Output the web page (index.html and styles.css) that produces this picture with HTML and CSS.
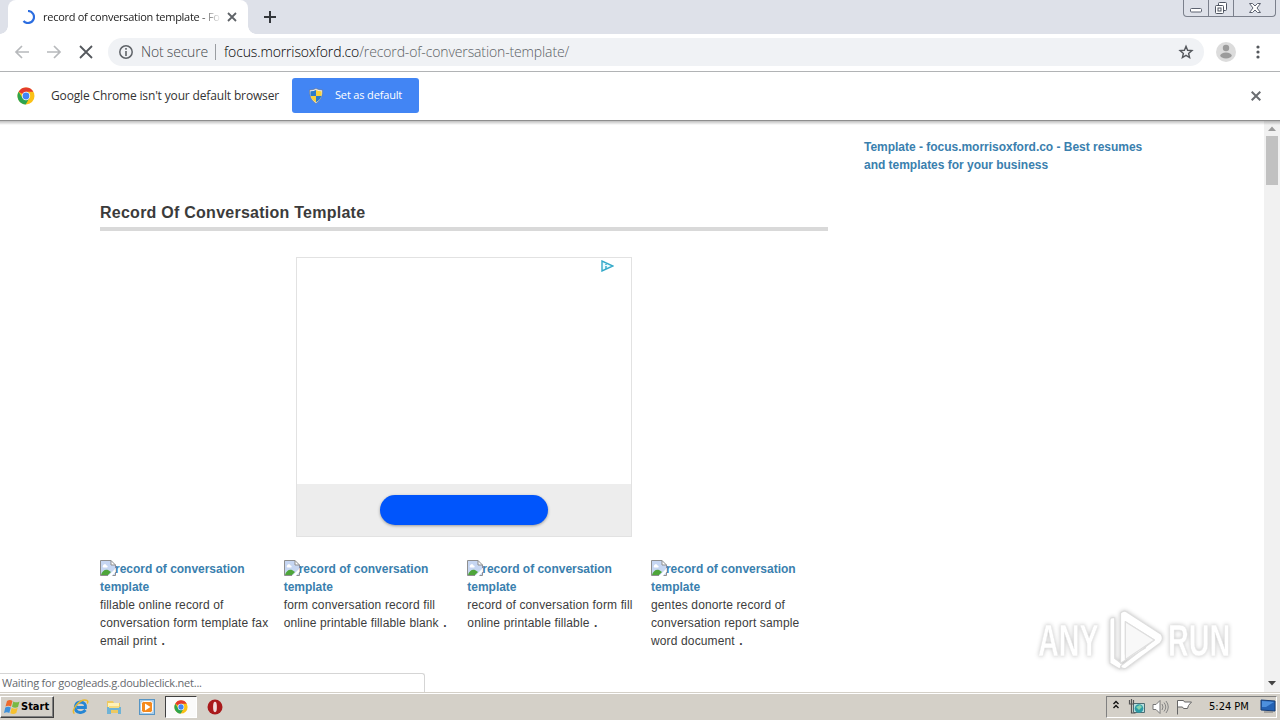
FILE: index.html
```html
<!DOCTYPE html>
<html lang="en">
<head>
    <meta charset="UTF-8">
    <title>Record Of Conversation Template</title>
    <link rel="stylesheet" href="styles.css">
</head>
<body>
    <svg class="defs" width="0" height="0">
        <symbol id="chrome" viewBox="0 0 18 18">
            <circle cx="9" cy="9" r="8.5" fill="#fbc116"/>
            <path d="M9 9 1.6 4.8A8.5 8.5 0 0 1 16.4 4.8H9z" fill="#e33b2e"/>
            <path d="M1.6 4.8A8.5 8.5 0 0 0 8.7 17.5L12.4 11 9 9 5.6 11z" fill="#2da44e"/>
            <circle cx="9" cy="9" r="4.2" fill="#fff"/>
            <circle cx="9" cy="9" r="3.4" fill="#4285f4"/>
        </symbol>
        <symbol id="broken" viewBox="0 0 16 16">
            <path d="M.5.5h10.500l4.500 4.500v10.500H.5z" fill="#c6d6f2"/>
            <path d="M3 6c0-2 3-2.500 3.500-.5C8 5.500 8 7.500 7 7.500H3.500C2.500 7.500 2.500 6 3 6z" fill="#fff"/>
            <path d="M1 15c1-4 4-6 7-5l3 2-3 3z" fill="#4ea53a"/>
            <path d="M11 .5v4.500h4.500z" fill="#fff"/>
            <path d="M15.500 8V5L11 .5H.5v15H8M11 .5V5h4.500M12.500 15.500h3V12" fill="none" stroke="#8f8f8f"/>
            <path d="M8 16 16 8v3.500L11.500 16z" fill="#fff"/>
        </symbol>
    </svg>

    <header class="tabstrip">
        <div class="tab">
            <svg class="spinner" width="14" height="14" viewBox="0 0 14 14"><path d="M7 1a6 6 0 1 1-4.500 10" fill="none" stroke="#2b6de0" stroke-width="2.200"/></svg>
            <span class="tab-title">record of conversation template - Fo</span>
            <svg width="10" height="10" viewBox="0 0 10 10"><path d="m1 1 8 8M9 1 1 9" stroke="#5f6368" stroke-width="1.800"/></svg>
        </div>
        <svg class="new-tab" width="12" height="12" viewBox="0 0 12 12"><path d="M6 0v12M0 6h12" stroke="#33363b" stroke-width="2"/></svg>
        <div class="window-buttons">
            <span class="wb"><svg width="12" height="16" viewBox="0 0 12 16"><rect x=".5" y="8.500" width="11" height="3.500" rx="1" fill="#fff" stroke="#5c6270"/></svg></span>
            <span class="wb"><svg width="14" height="16" viewBox="0 0 14 16"><rect x="4.500" y="2.500" width="8" height="8" rx="1" fill="#fff" stroke="#4e5461"/><rect x="1.500" y="5.500" width="8" height="8" rx="1" fill="#fff" stroke="#4e5461"/><rect x="4" y="8" width="3" height="3" fill="#fff" stroke="#4e5461"/></svg></span>
            <span class="wb wide"><svg width="12" height="16" viewBox="0 0 12 16"><path d="M.5 3.500h3L6 6l2.500-2.500h3L8 8l3.500 4.500h-3L6 10l-2.500 2.500h-3L4 8z" fill="#fff" stroke="#5c6270"/></svg></span>
        </div>
    </header>

    <div class="toolbar">
        <svg class="nav" width="16" height="14" viewBox="0 0 16 14"><path d="M15 7H2M8 1 2 7l6 6" fill="none" stroke="#b7b9bc" stroke-width="1.700"/></svg>
        <svg class="nav" width="16" height="14" viewBox="0 0 16 14"><path d="M1 7h13M8 1l6 6-6 6" fill="none" stroke="#b7b9bc" stroke-width="1.700"/></svg>
        <svg class="nav" width="16" height="14" viewBox="0 0 16 14"><path d="m2 1 12 12M14 1 2 13" fill="none" stroke="#55585d" stroke-width="1.800"/></svg>
        <div class="omnibox">
            <svg width="14" height="14" viewBox="0 0 14 14"><circle cx="7" cy="7" r="6.200" fill="none" stroke="#5f6368" stroke-width="1.500"/><path d="M7 3v1.700M7 6v5" stroke="#5f6368" stroke-width="1.600"/></svg>
            <span class="not-secure">Not secure</span>
            <span class="divider"></span>
            <span class="url"><span class="host">focus.morrisoxford.co</span><span class="path">/record-of-conversation-template/</span></span>
            <svg class="star" width="16" height="16" viewBox="0 0 16 16"><path d="m8 2.300 1.600 4 4.300.3-3.300 2.800 1 4.200L8 11.300l-3.600 2.300 1-4.200-3.300-2.800 4.300-.3z" fill="none" stroke="#55585d" stroke-width="1.400"/></svg>
        </div>
        <svg class="avatar" width="20" height="20" viewBox="0 0 20 20"><circle cx="10" cy="10" r="10" fill="#dcdcdc"/><circle cx="10" cy="6" r="3.200" fill="#9b9b9b"/><ellipse cx="10" cy="13.500" rx="5.700" ry="3" fill="#9b9b9b"/></svg>
        <svg class="menu" width="4" height="14" viewBox="0 0 4 14"><circle cx="2" cy="2" r="1.600" fill="#55585d"/><circle cx="2" cy="7" r="1.600" fill="#55585d"/><circle cx="2" cy="12" r="1.600" fill="#55585d"/></svg>
    </div>

    <div class="infobar">
        <svg width="18" height="18"><use href="#chrome"/></svg>
        <span class="info-text">Google Chrome isn't your default browser</span>
        <div class="default-btn">
            <svg width="14" height="16" viewBox="0 0 14 16"><path d="M7 .5Q10 2 13.500 2q.5 9-6.500 13.500Q0 11 .5 2 4 2 7 .5z" fill="#eee" stroke="#6d7480" stroke-width=".6"/><path d="M7 2v6H1.700Q1.200 5.500 1.500 3.200 4.500 3.200 7 2zM7 8h5.300Q11.500 12 7 14.300z" fill="#2b7bcb"/><path d="M7 2q2.500 1.200 5.500 1.200.3 2.300-.2 4.800H7zM1.700 8H7v6.300Q2.500 12 1.700 8z" fill="#f7d13c"/></svg>
            <span class="btn-text">Set as default</span>
        </div>
        <svg class="info-close" width="10" height="10" viewBox="0 0 10 10"><path d="m.7.7 8.600 8.600M9.300.7.700 9.300" stroke="#6a6d71" stroke-width="2"/></svg>
    </div>

    <div class="viewport">
        <div class="page">
            <main class="main">
                <h1>Record Of Conversation Template</h1>
                <div class="ad">
                    <svg class="adchoices" width="13" height="12" viewBox="0 0 13 12"><path d="M1 1v10l11-5z" fill="#e9fbff" stroke="#33a9c9" stroke-width="1.400"/><path d="M5 4v1M5 6v3" stroke="#33a9c9" stroke-width="1.400"/></svg>
                    <div class="ad-footer"><span class="ad-btn"></span></div>
                </div>
                <div class="gallery">
                    <div class="item">
                        <a><svg class="thumb" width="16" height="16"><use href="#broken"/></svg>record of conversation<br>template</a>
                        <p>fillable online record of<br>conversation form template fax<br>email print<b> .</b></p>
                    </div>
                    <div class="item">
                        <a><svg class="thumb" width="16" height="16"><use href="#broken"/></svg>record of conversation<br>template</a>
                        <p>form conversation record fill<br>online printable fillable blank<b> .</b></p>
                    </div>
                    <div class="item">
                        <a><svg class="thumb" width="16" height="16"><use href="#broken"/></svg>record of conversation<br>template</a>
                        <p>record of conversation form fill<br>online printable fillable<b> .</b></p>
                    </div>
                    <div class="item">
                        <a><svg class="thumb" width="16" height="16"><use href="#broken"/></svg>record of conversation<br>template</a>
                        <p>gentes donorte record of<br>conversation report sample<br>word document<b> .</b></p>
                    </div>
                </div>
            </main>
            <aside class="sidebar"><a>Template - focus.morrisoxford.co - Best resumes<br>and templates for your business</a></aside>
        </div>
        <div class="scrollbar">
            <svg width="16" height="14" viewBox="0 0 16 14"><path d="M4 10h8L8 5.500z" fill="#9a9a9a"/></svg>
            <span class="thumb-bar"></span>
            <svg class="down" width="16" height="17" viewBox="0 0 16 17"><path d="M4 6h8l-4 4.500z" fill="#444"/></svg>
        </div>
        <div class="status">Waiting for googleads.g.doubleclick.net...</div>
        <div class="watermark">
            <span class="wm-any">ANY</span>
            <svg width="58" height="66" viewBox="0 0 60 66"><g fill="#fff" stroke="#dedede" stroke-width="1.200" stroke-linejoin="round"><path d="M3 12q0-4 5-3v42l8 6-3 5-10-6z"/><path d="M14 4q4-4 8 0l34 22q3 5-1 9L20 61q-4 2-6-2l35-27-30-19v34l18-11 3 4-26 16z"/><path d="m19 13 30 19-30 20z" fill="#f8f8f8"/></g></svg>
            <span class="wm-run">RUN</span>
        </div>
    </div>

    <footer class="taskbar">
        <div class="start">
            <svg width="17" height="16" viewBox="0 0 17 16"><path d="M3 2q3-2 5.500 0L7 7.500Q4.500 6 1.500 7.500z" fill="#ee6a2c"/><path d="M9.300 2.500q3 1.700 6.200 0L14 8q-3 1.500-6-.2z" fill="#79b943"/><path d="M1.300 8.500q3-1.500 5.500 0L5.300 14Q3 12.500 0 14z" fill="#3f91db"/><path d="M7.700 8.800q3 1.700 6 0L12.300 14q-3 1.700-6 .2z" fill="#f6c12f"/></svg>
            <span>Start</span>
        </div>
        <div class="quick">
            <span class="task"><svg width="17" height="16" viewBox="0 0 17 16"><path d="M13.500 11Q11 14 8 13.500 3 13 3.300 8 4 3 8.500 3 14 3.500 13.500 8.500H5" fill="none" stroke="#2586d4" stroke-width="2.800"/><path d="M2.500 14.500C-2 12 8-1 15 1.500q1.500 1 .2 3" fill="none" stroke="#e9b92f" stroke-width="1.500"/></svg></span>
            <span class="task"><svg width="16" height="16" viewBox="0 0 16 16"><path d="M1 2h6l1 2h6v10H1z" fill="#edc962"/><path d="M2 4h11v5H2z" fill="#fff2b7"/><path d="M1 8h14v7h-3v-4H5v4H1z" fill="#6fb3d6"/><path d="M3 7h10v2H3z" fill="#f6dc80"/></svg></span>
            <span class="task"><svg width="16" height="16" viewBox="0 0 16 16"><rect x=".5" y=".5" width="15" height="15" fill="#a9cce7" stroke="#5795c4"/><rect x="2.500" y="2.500" width="11" height="11" rx="2" fill="#f58a1d" stroke="#fff"/><path d="m6 4.500 5.500 3.500L6 11.500z" fill="#fff"/></svg></span>
            <span class="task active"><svg width="14" height="14"><use href="#chrome"/></svg></span>
            <span class="task"><svg width="16" height="16" viewBox="0 0 16 16"><circle cx="8" cy="8" r="7.500" fill="#a9191b"/><ellipse cx="8" cy="8" rx="1.900" ry="5.200" fill="#f1dddd"/></svg></span>
        </div>
        <div class="tray">
            <svg class="chev" width="8" height="10" viewBox="0 0 8 10"><path d="m1.500 4 2.500-2.500L6.500 4M1.500 8 4 5.500 6.500 8" fill="none" stroke="#111" stroke-width="1.400"/></svg>
            <svg class="net" width="17" height="16" viewBox="0 0 17 16"><path d="M5.500 4.500h11v9h-11z" fill="#b9dfdf" stroke="#4d6e74"/><circle cx="11" cy="9.500" r="4.300" fill="#2c9ba6"/><path d="m8 8 4-2 2 2-3 3z" fill="#86d4ae"/><path d="M1.500 1v4h4V1M3.500 0v14h4" fill="none" stroke="#555" stroke-width="1.200"/></svg>
            <svg class="vol" width="17" height="16" viewBox="0 0 17 16"><path d="M1 5.500h3l4-4v13l-4-4H1z" fill="#fff" stroke="#777"/><path d="M10 5q2 3 0 6M12 3.500q3.500 4.500 0 9M14 2q4.500 6 0 12" fill="none" stroke="#858585"/></svg>
            <svg class="flag" width="17" height="16" viewBox="0 0 17 16"><path d="M1.500 15.500V1.500h6l1 1.500h7l-3 3.500-1 3h-4l-1-1.500h-5" fill="#fff" stroke="#666"/></svg>
            <span class="clock">5:24 PM</span>
            <svg class="desk" width="16" height="15" viewBox="0 0 16 15"><path d="m1 1 14 1v10L1 11z" fill="#2462b4" stroke="#173d74"/><path d="m2 2 12 1-8 5H2z" fill="#4d90dd"/><path d="M4 13h9" stroke="#777"/></svg>
        </div>
    </footer>
</body>
</html>
```
FILE: styles.css
```css
* {
    box-sizing: border-box;
}
body {
    margin: 0;
    width: 1280px;
    height: 720px;
    overflow: hidden;
    display: flex;
    flex-direction: column;
    background: #fff;
    font-family: "Liberation Sans", Arial, sans-serif;
    font-size: 12px;
    white-space: nowrap;
}
svg {
    display: block;
    flex: none;
}
.defs {
    position: absolute;
}
.tabstrip {
    height: 34px;
    flex: none;
    display: flex;
    background: #dee1e9;
}
.tab {
    width: 240px;
    margin-left: 8px;
    padding: 0 11px 0 13px;
    display: flex;
    align-items: center;
    background: #fff;
    border-radius: 8px 8px 0 0;
    position: relative;
}
.tab::before,
.tab::after {
    content: "";
    position: absolute;
    bottom: 0;
    width: 8px;
    height: 8px;
}
.tab::before {
    left: -8px;
    background: radial-gradient(circle at 0 0, transparent 7.5px, #fff 8px);
}
.tab::after {
    right: -8px;
    background: radial-gradient(circle at 100% 0, transparent 7.5px, #fff 8px);
}
.tab-title {
    width: 179px;
    margin: 0 auto 1px 8px;
    font-family: "Open Sans", sans-serif;
    font-size: 11px;
    letter-spacing: -0.27px;
    color: #222;
    -webkit-mask-image: linear-gradient(90deg, #000 155px, transparent 179px);
    mask-image: linear-gradient(90deg, #000 155px, transparent 179px);
}
.new-tab {
    margin: 11px 0 0 16px;
}
.window-buttons {
    display: flex;
    width: 93px;
    height: 17px;
    margin: 0 4px 0 auto;
    border: 1px solid #7b808c;
    border-top: 0;
    border-radius: 0 0 4px 4px;
}
.wb {
    width: 25px;
    display: flex;
    justify-content: center;
    border-right: 1px solid #7b808c;
}
.wide {
    width: 41px;
    border: 0;
}
.toolbar {
    height: 38px;
    flex: none;
    display: flex;
    align-items: center;
    padding: 0 20px 2px 14px;
    border-bottom: 1px solid #b1b3b5;
}
.nav {
    margin-right: 16px;
}
.omnibox {
    width: 1096px;
    height: 28px;
    margin-left: -2px;
    padding: 0 10px 0 11px;
    display: flex;
    align-items: center;
    background: #f0f2f5;
    border-radius: 14px;
    font-family: "Open Sans", sans-serif;
    font-weight: 300;
    font-size: 14px;
    letter-spacing: -0.13px;
}
.not-secure {
    margin-left: 8px;
    width: 67px;
    color: #44474b;
    letter-spacing: -0.2px;
}
.divider {
    width: 1px;
    height: 16px;
    margin: 0 8px 0 7px;
    background: #9a9da1;
}
.host {
    color: #000;
}
.path {
    color: #5b5f64;
}
.star {
    margin-left: auto;
}
.avatar {
    margin-left: 12px;
}
.menu {
    margin-left: auto;
}
.infobar {
    height: 49px;
    flex: none;
    display: flex;
    align-items: center;
    padding: 0 19px 0 17px;
    border-bottom: 1px solid #8e8e8e;
    font-family: "Open Sans", sans-serif;
}
.info-text {
    width: 241px;
    margin: 0 0 2px 16px;
    font-size: 12px;
    letter-spacing: -0.15px;
    color: #333;
}
.default-btn {
    width: 127px;
    height: 35px;
    margin-bottom: 1px;
    padding-left: 17px;
    display: flex;
    align-items: center;
    background: #4285f4;
    border-radius: 3px;
    color: #fff;
    font-size: 11px;
    letter-spacing: -0.16px;
}
.btn-text {
    margin: 0 0 2px 12px;
}
.info-close {
    margin-left: auto;
}
.viewport {
    height: 571px;
    flex: none;
    display: flex;
    position: relative;
}
.viewport::before {
    content: "";
    position: absolute;
    top: 0;
    left: 0;
    width: 100%;
    height: 4px;
    background: linear-gradient(rgba(0, 0, 0, 0.25), transparent);
}
.page {
    width: 1264px;
    padding-left: 100px;
    display: flex;
    line-height: 18px;
}
.main {
    width: 728px;
}
h1 {
    height: 29px;
    margin: 81px 0 26px;
    border-bottom: 4px solid #d9d9d9;
    color: #3b3b3b;
    font-size: 16px;
    line-height: 22px;
    letter-spacing: 0.25px;
}
.ad {
    width: 336px;
    height: 280px;
    margin: 0 auto;
    display: flex;
    flex-direction: column;
    border: 1px solid #e2e2e2;
}
.adchoices {
    margin: 2px 17px 0 auto;
}
.ad-footer {
    height: 52px;
    margin-top: auto;
    padding-top: 11px;
    background: #ededed;
}
.ad-btn {
    display: block;
    width: 168px;
    height: 30px;
    margin: 0 auto;
    border-radius: 15px;
    background: #0055fc;
    box-shadow: 0 1px 3px #999;
}
.gallery {
    display: grid;
    grid-template-columns: repeat(4, 183.67px);
    margin-top: 23px;
}
a {
    color: #3a80ae;
    font-weight: bold;
    letter-spacing: -0.02px;
}
.thumb {
    display: inline-block;
    vertical-align: -3px;
    margin-right: -1px;
}
.item p {
    margin: 0;
    color: #3c3c3c;
    letter-spacing: 0.14px;
}
.item b {
    margin-left: 1px;
}
.sidebar {
    margin: 17px 0 0 36px;
}
.scrollbar {
    width: 16px;
    display: flex;
    flex-direction: column;
    align-items: center;
    background: #f1f1f1;
}
.thumb-bar {
    width: 12px;
    height: 49px;
    margin-top: 1px;
    background: #c1c1c1;
}
.down {
    margin-top: auto;
}
.status {
    position: absolute;
    left: 0;
    bottom: 0;
    width: 425px;
    height: 19px;
    padding-left: 2px;
    background: #fff;
    border: 1px solid #d5d5d5;
    border-left: 0;
    border-bottom: 0;
    border-radius: 0 3px 0 0;
    color: #66696d;
    font-family: "Open Sans", sans-serif;
    font-size: 11px;
    line-height: 18px;
    letter-spacing: -0.22px;
}
.watermark {
    position: absolute;
    left: 1038px;
    top: 487px;
    display: flex;
    align-items: center;
    gap: 3px;
    color: #fff;
    font-size: 45px;
    font-weight: bold;
    line-height: 66px;
    filter: drop-shadow(0 0 2px #c4c4c4);
}
.wm-any,
.wm-run {
    width: 66px;
    transform: scaleX(0.64);
    transform-origin: left;
    -webkit-text-stroke: 0.5px #e8e8e8;
}
.taskbar {
    height: 28px;
    flex: none;
    display: flex;
    align-items: center;
    padding: 0 3px 0 0;
    background: #d4d0c8;
    border-top: 1px solid #d4d0c8;
    box-shadow: inset 0 1px #fff;
}
.start {
    width: 54px;
    height: 22px;
    padding-left: 3px;
    display: flex;
    align-items: center;
    border: 1px solid;
    border-color: #fff #404040 #404040 #fff;
    box-shadow: inset -1px -1px #808080;
    font-family: "DejaVu Sans Condensed", sans-serif;
    font-weight: bold;
    font-size: 11px;
}
.quick {
    display: flex;
    margin-left: 10px;
}
.task {
    width: 32px;
    height: 22px;
    margin-right: 1.7px;
    display: flex;
    align-items: center;
    justify-content: center;
}
.active {
    border: 1px solid;
    border-color: #404040 #fff #fff #404040;
    background: #fafafa;
}
.tray {
    width: 171px;
    height: 22px;
    margin-left: auto;
    padding: 0 0 0 5px;
    display: flex;
    align-items: center;
    border: 1px solid;
    border-color: #808080 #fff #fff #808080;
}
.chev {
    margin-bottom: 3px;
}
.net {
    margin-left: 8px;
}
.vol {
    margin-left: 7px;
}
.flag {
    margin-left: 7px;
}
.clock {
    margin-left: 16px;
    font-family: "DejaVu Sans Condensed", sans-serif;
    font-size: 11px;
}
.desk {
    margin-left: auto;
}
```
